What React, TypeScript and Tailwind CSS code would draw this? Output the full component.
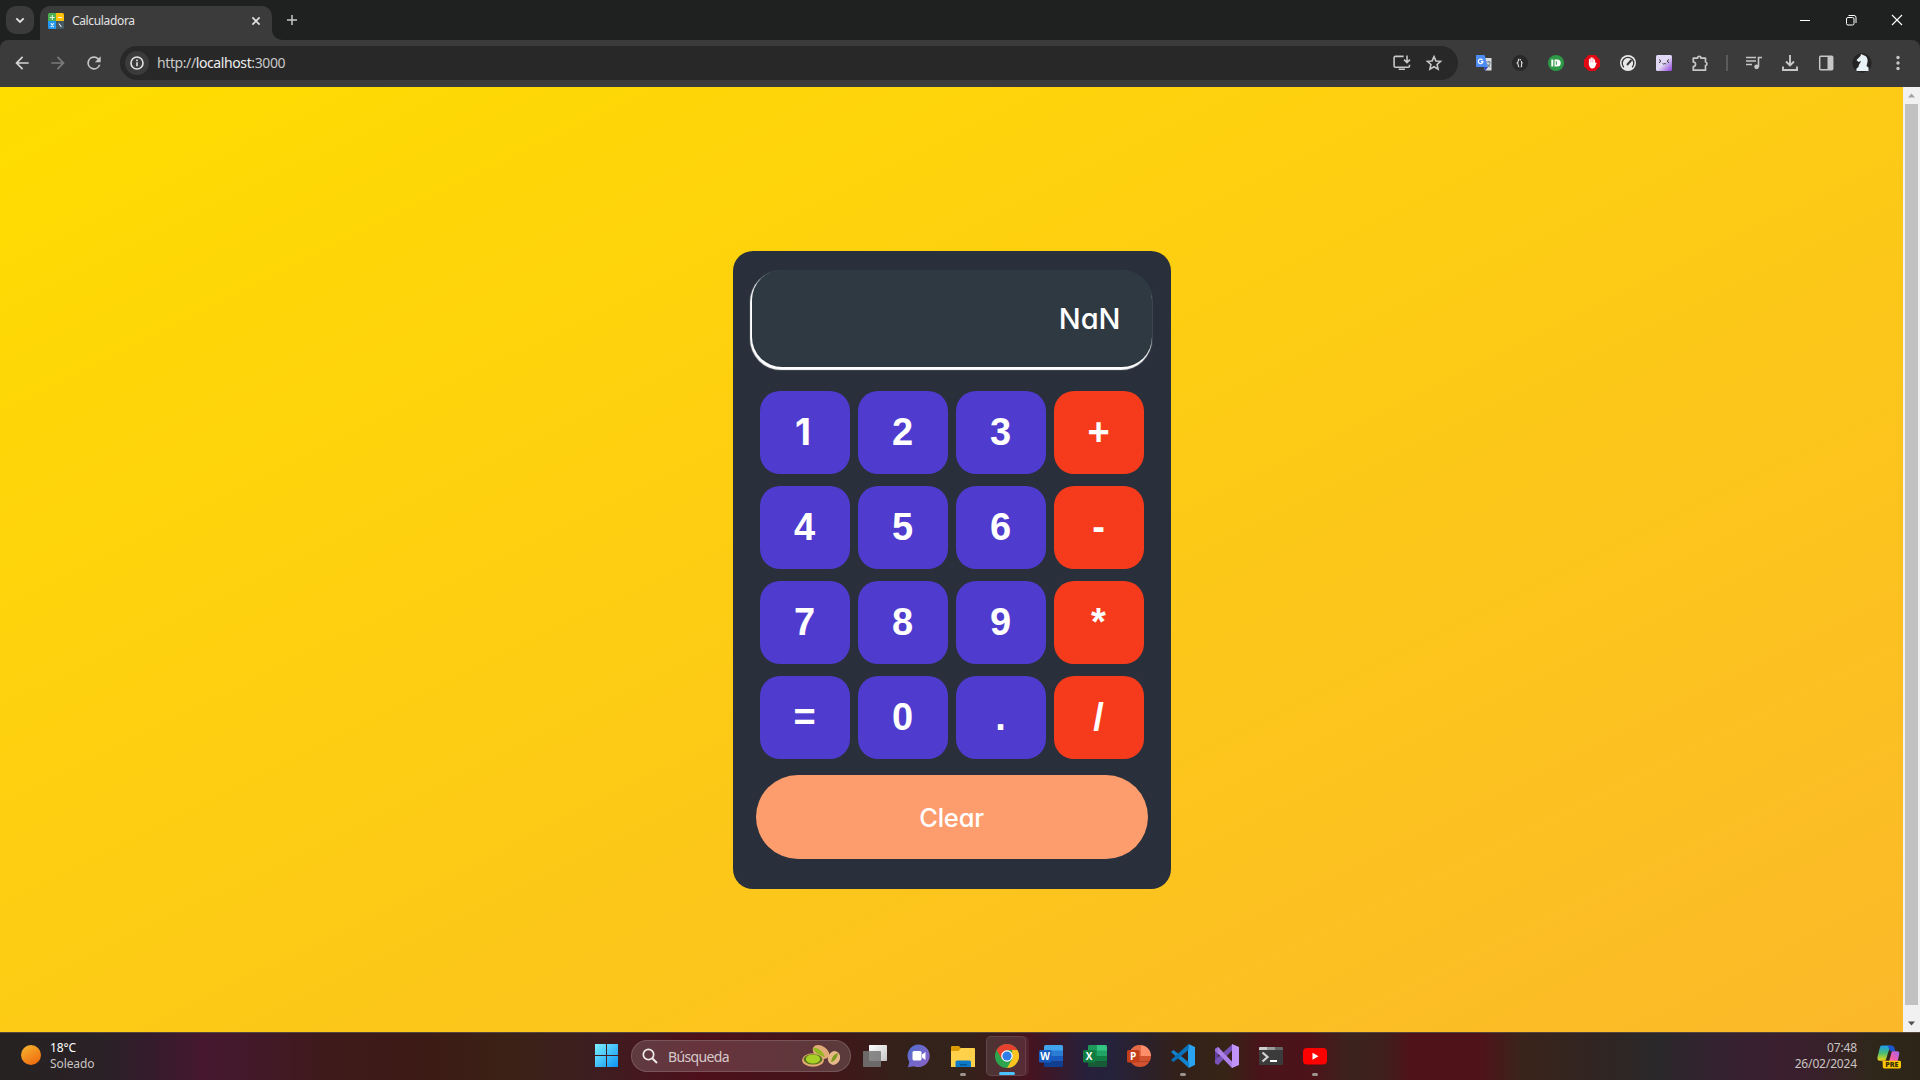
import React from "react";

type P = { children?: React.ReactNode; className?: string; vb?: string; size?: number };
const Svg = ({ children, className = "", vb = "0 0 24 24", size = 24 }: P) => (
  <svg viewBox={vb} width={size} height={size} className={`shrink-0 ${className}`}>{children}</svg>
);

const Slot = ({ children, className = "" }: P) => (
  <div className={`flex shrink-0 items-center justify-center ${className}`}>{children}</div>
);

const Favicon = () => (
  <Svg vb="0 0 16 16" size={16}>
    <clipPath id="fav"><rect width="16" height="16" rx="1.5" /></clipPath>
    <g clipPath="url(#fav)">
      <rect width="8" height="8" fill="#4caf50" />
      <rect x="8" width="8" height="8" fill="#ffc107" />
      <rect y="8" width="8" height="8" fill="#2196f3" />
      <rect x="8" y="8" width="8" height="8" fill="#455a64" />
    </g>
    <path d="M4.3 2v5M1.8 4.5h5M10 4.5h4M2.8 10.2l3 4M5.8 10.2l-3 4M10.8 10.5l2.6 3.4" stroke="#fff" strokeOpacity=".85" strokeWidth="1.1" fill="none" />
  </Svg>
);

function TitleBar() {
  return (
    <div className="flex h-10 items-stretch bg-[#1f2120]">
      <div className="flex w-10 items-center justify-center">
        <div className="flex h-7 w-7 items-center justify-center rounded-[10px] bg-[#3b3b3b]">
          <Svg vb="0 0 12 12" size={12}><path d="M2.3 4.3 6 8l3.7-3.7" fill="none" stroke="#e3e3e3" strokeWidth="1.8" /></Svg>
        </div>
      </div>
      <div className="mt-1.5 flex w-[232px] items-center rounded-t-[10px] bg-[#3b3b3b] pb-1 pl-2">
        <Favicon />
        <span className="ml-2 flex-1 text-[12px] leading-4 tracking-[-0.35px] text-[#e3e3e3]">Calculadora</span>
        <Svg vb="0 0 12 12" size={12} className="mr-2.5"><path d="M2.4 2.4l7.2 7.2M9.6 2.4 2.4 9.6" stroke="#e3e3e3" strokeWidth="1.6" /></Svg>
      </div>
      <svg width="10" height="10" className="self-end"><path d="M0 0v10h10A10 10 0 0 1 0 0" fill="#3b3b3b" /></svg>
      <div className="flex w-5 items-center justify-center">
        <Svg vb="0 0 12 12" size={12}><path d="M6 1v10M1 6h10" stroke="#c7c7c7" strokeWidth="1.5" /></Svg>
      </div>
      <div className="flex-1" />
      <Slot className="w-[46px]"><Svg vb="0 0 12 12" size={12}><path d="M1 6.5h10" stroke="#fff" /></Svg></Slot>
      <Slot className="w-[46px]">
        <Svg vb="0 0 12 12" size={12}><rect x="1.5" y="3.5" width="7.5" height="7.5" rx="1.5" fill="none" stroke="#fff" /><path d="M3.5 1.5H9A2 2 0 0 1 11 3.5V9" fill="none" stroke="#fff" /></Svg>
      </Slot>
      <Slot className="w-[46px]"><Svg vb="0 0 12 12" size={12}><path d="M1 1l10 10M11 1 1 11" stroke="#fff" strokeWidth="1.1" /></Svg></Slot>
    </div>
  );
}

function Toolbar() {
  return (
    <div className="bg-[#1f2120]">
      <div className="flex h-[47px] items-center rounded-t-lg bg-[#3b3b3b]">
        <div className="flex items-center gap-4 pb-px pl-3">
          <Svg size={20}><path fill="#d5d5d5" d="M20 11H7.8l5.6-5.6L12 4l-8 8 8 8 1.4-1.4L7.8 13H20z" /></Svg>
          <Svg size={20}><path fill="#7b7b7b" d="m12 4-1.4 1.4 5.6 5.6H4v2h12.2l-5.6 5.6L12 20l8-8z" /></Svg>
          <Svg size={20}><path fill="#c7c7c7" d="M17.65 6.35A8 8 0 1 0 19.73 14h-2.08A6 6 0 1 1 12 6c1.66 0 3.14.69 4.22 1.78L13 11h7V4z" /></Svg>
        </div>
        <div className="mb-px ml-4 flex h-[34px] w-[1338px] items-center rounded-full bg-[#282828] pl-[5px] pr-3.5">
          <div className="flex h-6 w-6 items-center justify-center rounded-full bg-[#3b3b3b]">
            <Svg vb="0 0 16 16" size={16}><circle cx="8" cy="8" r="6" fill="none" stroke="#e3e3e3" strokeWidth="1.6" /><path d="M8 7.2v4M8 4.6v1.6" stroke="#e3e3e3" strokeWidth="1.6" /></Svg>
          </div>
          <div className="ml-2 flex-1 text-[14px] leading-5 tracking-[-0.4px] text-[#c7c7c7]">http://<span className="text-[#ededed]">localhost</span>:3000</div>
          <Svg size={20}><path d="M14 4H4a1.500 1.500 0 0 0-1.500 1.500v10A1.500 1.500 0 0 0 4 17h15.500a1.500 1.500 0 0 0 1.500-1.500V14M8 19.500h7.500M18 3v8M14.500 8l3.500 3.500L21.500 8" fill="none" stroke="#c7c7c7" strokeWidth="1.900" /></Svg>
          <Svg size={20} className="ml-3"><path d="M12 4.3l2.3 5.2 5.6.5-4.2 3.800 1.200 5.600-4.900-2.900-4.900 2.900 1.200-5.600L4.100 10l5.600-.5z" fill="none" stroke="#c7c7c7" strokeWidth="1.900" /></Svg>
        </div>
        <div className="flex items-center pb-px pl-2">
          <Slot className="w-9"><Svg vb="0 0 16 16" size={16}><path d="M6 3h9.500v12.500H9z" fill="#dcdcdc" /><path d="M0 0h8.500L12 12H1a1 1 0 0 1-1-1z" fill="#4d8cf5" /><path d="M8 12h4l-3 4z" fill="#3046c8" /><path d="M6.600 5.200A2.300 2.300 0 1 0 6.900 6.600H4.800" fill="none" stroke="#fff" strokeWidth="1.200" /><path d="M10.500 7h4M12.500 6v1M11 12.500c2-1 3-3 3-5.500M11.500 9l2.500 3.500" stroke="#5b6d78" fill="none" strokeWidth=".8" /></Svg></Slot>
          <Slot className="w-9"><Svg vb="0 0 16 16" size={16}><circle cx="8" cy="8" r="8" fill="#292929" /><path d="M7.300 4C5.500 4 7 7.300 5.300 8 7 8.700 5.500 12 7.300 12M8.300 4v1.500M8.700 12c1.800 0 0-3.300 1.300-4-1.300-.7-.2-1.500-.5-2" stroke="#ddd" fill="none" strokeWidth="1.200" /></Svg></Slot>
          <Slot className="w-9"><Svg vb="0 0 16 16" size={16}><circle cx="8" cy="8" r="8" fill="#2e9a47" /><path d="M4.300 4.500v7" stroke="#fff" strokeWidth="2" /><path d="M6.500 4.500h2.700a3.500 3.500 0 0 1 0 7H6.500z" fill="#fff" /><path d="M8.300 6.200v3.600" stroke="#2e9a47" /></Svg></Slot>
          <Slot className="w-9"><Svg vb="0 0 16 16" size={16}><path d="M4.700 0h6.600L16 4.700v6.600L11.300 16H4.700L0 11.300V4.700z" fill="#e30613" /><path d="M5.600 9V4.500M7.200 8V3M8.900 8V3.300M10.400 9V5" stroke="#fff" strokeWidth="1.400" strokeLinecap="round" /><path d="M4.900 7.500h6.200L12.700 8l-1.900 4.500Q8 14.500 6 12.500L4.900 10z" fill="#fff" /></Svg></Slot>
          <Slot className="w-9"><Svg vb="0 0 16 16" size={16}><circle cx="8" cy="8" r="8" fill="#e8e8e8" /><path d="M3.800 12.200a5.800 5.800 0 1 1 8.400 0" fill="none" stroke="#333" strokeWidth="1.300" /><path d="M7 10l4.500-5" stroke="#333" strokeWidth="1.900" /></Svg></Slot>
          <Slot className="w-9"><Svg vb="0 0 16 16" size={16}><defs><linearGradient id="lil" x1="0" y1="0" x2="1" y2="1"><stop offset=".5" stopColor="#e0d8f5" /><stop offset="1" stopColor="#9040d8" /></linearGradient></defs><rect width="16" height="16" rx="1.500" fill="url(#lil)" /><path d="M3 4.500l2 1.700-2 1.700M13 4.500l-2 1.700 2 1.700M6.500 8.500l1 .5.800-.5.800.5 1-.5" stroke="#333" fill="none" /></Svg></Slot>
          <Slot className="w-9"><Svg vb="0 0 18 18" size={18}><path d="M2.300 4.200h4.200a1.700 1.700 0 0 1 3.500 0h4.500V8a1.900 1.900 0 0 1 0 3.700v4.500H2.300v-3.700a2.200 2.200 0 0 0 0-4.500z" fill="none" stroke="#c7c7c7" strokeWidth="1.700" strokeLinejoin="round" /></Svg></Slot>
          <Slot className="w-[18px]"><div className="h-4 w-0.5 bg-[#5b5b5b]" /></Slot>
          <Slot className="w-9"><Svg vb="0 0 18 18" size={18}><path d="M1 3.500h10M1 7h10M1 10.500h6M13.500 13V3.500H17" fill="none" stroke="#c7c7c7" strokeWidth="1.600" /><circle cx="11.600" cy="12.800" r="2.400" fill="#c7c7c7" /></Svg></Slot>
          <Slot className="w-9"><Svg vb="0 0 18 18" size={18}><path d="M9 1v10M5 7.500l4 4 4-4M2 12.500V16h14v-3.500" fill="none" stroke="#c7c7c7" strokeWidth="1.900" /></Svg></Slot>
          <Slot className="w-9"><Svg vb="0 0 18 18" size={18}><rect x="2.700" y="2.200" width="13" height="13.500" rx="1" fill="none" stroke="#c7c7c7" strokeWidth="1.500" /><path d="M10.500 2.500h5v13h-5z" fill="#c7c7c7" /></Svg></Slot>
          <Slot className="w-9"><Svg vb="0 0 20 20" size={20}><circle cx="10" cy="10" r="9.700" fill="#242424" /><path d="M4.500 7l4-4 .5-2 2 1c4 1 5 4 4.500 7l-1 4 2 1.500V18h-12v-2.500l2-1.500c0-3 2-3.500 2.500-6L6.500 9z" fill="#e9f3f7" /></Svg></Slot>
          <Slot className="w-9"><Svg vb="0 0 16 16" size={16}><circle cx="8" cy="2.500" r="1.700" fill="#c7c7c7" /><circle cx="8" cy="8" r="1.700" fill="#c7c7c7" /><circle cx="8" cy="13.500" r="1.700" fill="#c7c7c7" /></Svg></Slot>
        </div>
      </div>
    </div>
  );
}

const KEYS = ["1", "2", "3", "+", "4", "5", "6", "-", "7", "8", "9", "*", "=", "0", ".", "/"];

function Calculator() {
  return (
    <div className="flex h-[638px] w-[438px] flex-col rounded-[20px] bg-[#29303b] pt-[19px]">
      <div className="ml-[19px] flex h-[97px] w-[400px] items-center justify-end rounded-[30px] bg-[#2e3942] pr-[31px] shadow-[-1px_2px_1px_1px_#ffffff] [font-feature-settings:'cv11'] font-['Inter'] text-[29px] font-medium text-white">
        NaN
      </div>
      <div className="mx-[27px] mt-6 grid grid-cols-4 gap-x-2 gap-y-3">
        {KEYS.map((k) => (
          <button
            key={k}
            className={`h-[83px] rounded-[20px] pb-0.5 font-bold leading-none text-white ${k === "1" ? "pr-[3px] font-['Inter'] text-[37px]" : "font-['Liberation_Sans'] text-[38px]"} ${"+-*/".includes(k) ? "bg-[#f53b1c]" : "bg-[#4f3bce]"}`}
          >
            {k}
          </button>
        ))}
      </div>
      <button className="mx-[23px] mt-4 h-[84px] rounded-[42px] bg-[#fd9c6d] pt-0.5 [font-feature-settings:'cv11'] font-['Inter'] text-[25.5px] font-medium tracking-[-0.2px] text-white">Clear</button>
    </div>
  );
}

function Office({ letter, c, l }: { letter: string; c: string[]; l: string }) {
  return (
    <Svg>
      <clipPath id={"o" + letter}>{letter === "P" ? <circle cx="13" cy="12" r="11" /> : <rect x="5" y="1" width="19" height="22" rx="1.500" />}</clipPath>
      <g clipPath={`url(#o${letter})`}>
        <path d="M0 0h24v7H0z" fill={c[0]} /><path d="M0 6.500h24V12H0z" fill={c[1]} /><path d="M0 12h24v5.500H0z" fill={c[2]} /><path d="M0 17.500h24V24H0z" fill={c[3]} />
        {letter !== "W" && <path d="M5 0h9v12H5z" fill={c[2]} fillOpacity=".6" />}
      </g>
      <rect x="0" y="6" width="12.500" height="12.500" rx="1.500" fill={l} />
      <text x="6.200" y="15.700" textAnchor="middle" fill="#fff" fontSize="10" fontWeight="700" fontFamily="Open Sans">{letter}</text>
    </Svg>
  );
}

function Task({ children, mark }: { children: React.ReactNode; mark?: boolean }) {
  return (
    <div className="flex h-full w-11 shrink-0 flex-col items-center pt-[11px]">
      {children}
      {mark && <div className="mt-[5px] h-[3px] w-1.5 shrink-0 rounded-full bg-[#9d9492]" />}
    </div>
  );
}

function Taskbar() {
  return (
    <div className="flex h-12 items-stretch border-t border-[#55463f] bg-[linear-gradient(90deg,#262221_0px,#2a2126_100px,#341c2c_150px,#46172f_205px,#43192a_250px,#3f1a1b_320px,#3c1a15_420px,#3b2116_510px,#3d1e20_590px,#4d101b_700px,#431519_820px,#33221a_910px,#33231a_960px,#461320_1030px,#28203a_1085px,#25223c_1110px,#332019_1180px,#362417_1225px,#48141a_1260px,#4c1319_1310px,#3c231d_1350px,#3f1f1c_1385px,#4f1219_1410px,#4f1219_1480px,#3a241b_1520px,#302522_1600px,#2a282a_1660px,#342330_1710px,#3b1f2f_1780px,#38202a_1820px,#30271b_1870px,#2d2518_1920px)] text-[#c9c4c2]">
      <div className="flex w-[584px] gap-2 pl-5">
        <Svg vb="0 0 22 22" size={22} className="mt-3"><defs><linearGradient id="sun" x1=".2" y1="0" x2=".8" y2="1"><stop stopColor="#f4b22f" /><stop offset="1" stopColor="#f0680d" /></linearGradient></defs><circle cx="11" cy="10" r="10" fill="url(#sun)" /></Svg>
        <div className="pt-[7px] text-[12px] leading-4 tracking-[-0.1px]"><div className="text-white">18°C</div><div>Soleado</div></div>
      </div>
      <div className="flex w-[47px] pl-[11px] pt-2.5">
        <Svg vb="0 0 23 23" size={23} className="mt-px"><defs><linearGradient id="win" x2="1" y2="1"><stop stopColor="#7df0ff" /><stop offset="1" stopColor="#0b93f5" /></linearGradient></defs><path d="M0 0h11v11H0zM12 0h11v11H12zM0 12h11v11H0zM12 12h11v11H12z" fill="url(#win)" /></Svg>
      </div>
      <div className="mt-[7px] flex h-8 w-[220px] items-center rounded-full border border-white/15 bg-white/15 pl-2.5 pr-2.5">
        <Svg vb="0 0 16 16" size={16}><circle cx="6.500" cy="6.500" r="5.200" fill="none" stroke="#f0eaea" strokeWidth="1.700" /><path d="M10.500 10.500 15 15" stroke="#f0eaea" strokeWidth="1.900" /></Svg>
        <span className="ml-2.5 flex-1 text-[14px] tracking-[-0.65px] text-[#d6c9ca]">Búsqueda</span>
        <svg viewBox="0 0 38 22" width="38" height="22"><ellipse cx="19" cy="7" rx="9" ry="6" transform="rotate(32 19 7)" fill="#e0ab76" /><path d="M11 3c5-1 10 4 12 9-6-1-10-4-12-9" fill="#92b821" /><ellipse cx="32" cy="13" rx="6" ry="7" transform="rotate(20 32 13)" fill="#e6b887" /><path d="M29 17c1-5 3-8 7-9-1 5-3 8-7 9" fill="#7c9a1c" /><ellipse cx="11" cy="15" rx="11" ry="6.700" fill="#e3aa74" /><ellipse cx="11" cy="14.300" rx="9.300" ry="5.200" fill="#57711a" /><ellipse cx="11" cy="14" rx="7.200" ry="4.600" fill="#a8cf26" /></svg>
      </div>
      <div className="flex pl-[2px]">
        <Task><Svg><defs><linearGradient id="tv" x2="1" y2="1"><stop stopColor="#fff" /><stop offset="1" stopColor="#c5c5c5" /></linearGradient></defs><rect x="6" y="1" width="18" height="16" rx=".8" fill="url(#tv)" /><rect y="7" width="18" height="16" rx=".8" fill="#777" fillOpacity=".85" /></Svg></Task>
        <Task><Svg><defs><linearGradient id="chat" x1="0" y1="0" x2="1" y2="1"><stop stopColor="#4d6fce" /><stop offset=".5" stopColor="#7167c9" /><stop offset="1" stopColor="#8c62c7" /></linearGradient></defs><path d="M12 .5A11.300 11.300 0 1 1 7 22.200L1 23.300l1.300-5.500A11.300 11.300 0 0 1 12 .5" fill="url(#chat)" /><rect x="5.500" y="7" width="9" height="9.500" rx="1.500" fill="#fff" /><path d="M15 10.500 18.500 8v8L15 13.500z" fill="#fff" /></Svg></Task>
        <Task mark><Svg><path d="M0 3a1 1 0 0 1 1-1h7l2.500 3v3H0z" fill="#dc9c05" /><path d="M0 7h7.500L10 4h13a1 1 0 0 1 1 1v18H0z" fill="#ffd04a" /><path d="M4.500 23v-5a1.500 1.500 0 0 1 1.500-1.500h12.500A1.500 1.500 0 0 1 20 18v5z" fill="#0c79c8" /><path d="M9 20h7v1.500H9z" fill="#075792" /></Svg></Task>
        <div className="ml-px mt-[3px] flex h-10 w-10 shrink-0 flex-col items-center rounded-[5px] border border-white/10 bg-white/10 pl-0.5 pt-[7px] shadow-[3px_0_0_0_#ffffff12]">
          <Svg><circle cx="12" cy="12" r="12" fill="#2da44e" /><path d="M1.600 6A12 12 0 0 1 22.400 6H12L6.800 15z" fill="#e8412f" /><path d="M22.400 6A12 12 0 0 1 12 24l5.200-9V6z" fill="#fcc31e" /><circle cx="12" cy="12" r="5.800" fill="#fff" /><circle cx="12" cy="12" r="4.600" fill="#2f7de9" /></Svg>
          <div className="mt-[4px] h-[3px] w-4 shrink-0 rounded-full bg-[#4cc2ff]" />
        </div>
        <div className="w-[3px]" />
        <Task><Office letter="W" c={["#41a5ee", "#2b7cd3", "#185abd", "#103f91"]} l="#185abd" /></Task>
        <Task><Office letter="X" c={["#33c481", "#21a366", "#107c41", "#185c37"]} l="#107c41" /></Task>
        <Task><Office letter="P" c={["#ff8f6b", "#ff8f6b", "#d35230", "#d35230"]} l="#c43e1c" /></Task>
        <Task mark><Svg><path d="M17.500 0 24 3v18l-6.500 3-.5-7V7z" fill="#2aa4f0" /><path d="m0 8 2.500-2L18 18.500V24z" fill="#1284cf" /><path d="M0 16 17.500 0v6L2.500 18z" fill="#0871b8" /></Svg></Task>
        <Task><Svg><path d="m0 5 3-2v18l-3-2z" fill="#6040a0" /><path d="M3 3 17.500 18V24L0 7V5z" fill="#9a70d8" /><path d="M3 21 17.500 6V0L0 16v3z" fill="#7952b7" /><path d="M17 0l7 3v18l-7 3z" fill="#c394f8" /><path d="M3 3l14 15v6L3 9z" fill="#ae81e8" /></Svg></Task>
        <Task><Svg><rect y="3" width="24" height="18" rx="1" fill="#3b3b3b" /><path d="M0 6V4a1 1 0 0 1 1-1h7v3z" fill="#ccc" /><path d="M8 3h8v3H8z" fill="#999" /><path d="M16 3h7a1 1 0 0 1 1 1v2h-8z" fill="#666" /><path d="m3.500 8.500 5 4.500-5 4.500" fill="none" stroke="#d0d0d0" strokeWidth="2.300" /><path d="M11 17h7" stroke="#fff" strokeWidth="2" /></Svg></Task>
        <Task mark><Svg><rect y="4" width="24" height="16.500" rx="4" fill="#f00" /><path d="m9.500 8.700 6 3.500-6 3.500z" fill="#fff" /></Svg></Task>
      </div>
      <div className="flex-1 pr-5 pt-[7px] text-right text-[12px] leading-4 tracking-[-0.15px]"><div>07:48</div><div>26/02/2024</div></div>
      <div className="w-[43px] pt-3">
        <Svg vb="0 0 25 24" size={24}><defs><linearGradient id="ca" x2="0" y2="1"><stop stopColor="#199cf0" /><stop offset=".5" stopColor="#4bbd72" /><stop offset="1" stopColor="#f4d70c" /></linearGradient><linearGradient id="cb" x1="1" x2="0" y2="1"><stop stopColor="#a266f0" /><stop offset=".6" stopColor="#f45caa" /><stop offset="1" stopColor="#ff9668" /></linearGradient></defs>
          <path d="M5 0h9l-4.500 14q-.5 2-2.500 2H3q-3 0-2.500-4L3 2Q3.500 0 5 0" fill="url(#ca)" /><path d="M11 0h4a3 3 0 0 1 3 2l1.200 4H14z" fill="#1b55cf" /><path d="M15.500 6H21q3 0 2 4l-2 9h-9z" fill="url(#cb)" /><path d="M5 16h5l2 3H7z" fill="#f28c58" />
          <rect x="6" y="16" width="19" height="8" rx="1.500" fill="#fcc600" /><text x="15.500" y="22.800" textAnchor="middle" fontFamily="Open Sans" fontSize="7.500" fontWeight="800" fill="#39300a">PRE</text></Svg>
      </div>
    </div>
  );
}

export default function App() {
  return (
    <div className="flex h-[1080px] w-[1920px] flex-col overflow-hidden font-['Noto_Sans',sans-serif]">
      <TitleBar />
      <Toolbar />
      <div className="flex h-[945px]">
        <div className="flex flex-1 justify-center bg-[linear-gradient(to_bottom_right,#ffdd00,#fbb92a)] pt-[164px]">
          <Calculator />
        </div>
        <div className="flex w-[17px] flex-col items-center bg-[#f1f1f1]">
          <Slot className="h-[17px] w-full"><Svg vb="0 0 7 4" size={7}><path d="M0 4 3.500 0 7 4z" fill="#a3a3a3" /></Svg></Slot>
          <div className="w-[13px] flex-1 bg-[#c1c1c1]" />
          <Slot className="mt-[10px] h-[17px] w-full"><Svg vb="0 0 7 4" size={7}><path d="M0 0 3.500 4 7 0z" fill="#505050" /></Svg></Slot>
        </div>
      </div>
      <Taskbar />
    </div>
  );
}
